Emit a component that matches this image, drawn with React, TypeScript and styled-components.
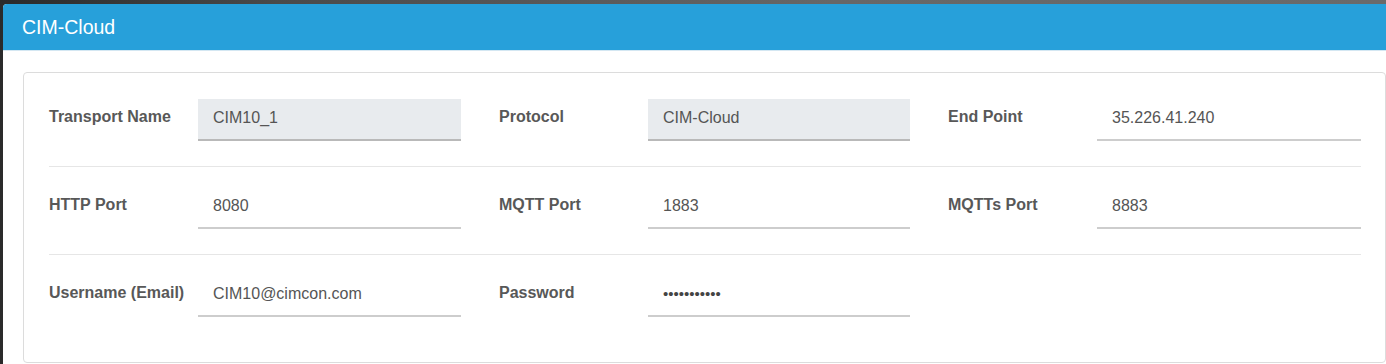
import React from "react";
import styled, { createGlobalStyle } from "styled-components";

const GlobalStyle = createGlobalStyle`
  html, body {
    margin: 0;
    height: 364px;
    overflow: hidden;
    background: linear-gradient(90deg, #2a2a2a 0, #4a4a4a 20%, #676767 60%, #6a6a6a 100%);
    font-family: "Liberation Sans", Arial, sans-serif;
  }
`;

const Page = styled.div`
  padding: 4px 0 0 3px;
  height: 360px;
  background: linear-gradient(180deg, transparent 0, transparent 4px, #2a2a2a 4px);
  background-clip: content-box;
`;

const Panel = styled.section`
  background: #fff;
  border-top-left-radius: 4px;
  height: 100%;
  overflow: hidden;
`;

const Header = styled.header`
  height: 46px;
  display: flex;
  align-items: center;
  padding-left: 19px;
  background: #27a0da;
  border-bottom: 1px solid #d4e7f2;
`;

const Title = styled.h4`
  margin: 0;
  font-size: 19.5px;
  font-weight: normal;
  color: #fff;
`;

const Body = styled.div`
  padding: 21px 0 0 20px;
`;

const Card = styled.div`
  border: 1px solid #dcdcdc;
  border-radius: 4px;
  padding: 6px 24px 20px 25px;
`;

const Row = styled.div`
  display: grid;
  grid-template-columns: 412px 411px 1fr;
  column-gap: 38px;
  padding: 20px 0 25px;
  border-bottom: 1px solid #e6e6e6;

  &:last-child {
    border-bottom: none;
  }
`;

const Field = styled.div`
  display: grid;
  grid-template-columns: 149px 1fr;
  align-items: start;
`;

const Label = styled.label`
  padding-top: 8px;
  line-height: 20px;
  font-size: 16px;
  font-weight: bold;
  color: #585858;
`;

const Input = styled.input<{ $locked?: boolean; $secret?: boolean }>`
  box-sizing: border-box;
  width: 100%;
  height: 42px;
  padding: 0 15px 3px;
  border: none;
  border-bottom: 2px solid ${({ $locked }) => ($locked ? "#b9b9b9" : "#cdcdcd")};
  background: ${({ $locked }) => ($locked ? "#e8ebee" : "#fff")};
  font-family: "Liberation Sans", Arial, sans-serif;
  font-size: ${({ $secret }) => ($secret ? "15px" : "16px")};
  color: ${({ $secret }) => ($secret ? "#444" : "#555")};
  outline: none;
`;

type FieldData = {
  label: string;
  value: string;
  locked?: boolean;
  secret?: boolean;
};

const rows: FieldData[][] = [
  [
    { label: "Transport Name", value: "CIM10_1", locked: true },
    { label: "Protocol", value: "CIM-Cloud", locked: true },
    { label: "End Point", value: "35.226.41.240" },
  ],
  [
    { label: "HTTP Port", value: "8080" },
    { label: "MQTT Port", value: "1883" },
    { label: "MQTTs Port", value: "8883" },
  ],
  [
    { label: "Username (Email)", value: "CIM10@cimcon.com" },
    { label: "Password", value: "cimcon12345", secret: true },
  ],
];

export default function App() {
  return (
    <>
      <GlobalStyle />
      <Page>
        <Panel>
          <Header>
            <Title>CIM-Cloud</Title>
          </Header>
          <Body>
            <Card>
              {rows.map((row, i) => (
                <Row key={i}>
                  {row.map((f) => (
                    <Field key={f.label}>
                      <Label>{f.label}</Label>
                      <Input
                        $locked={f.locked}
                        $secret={f.secret}
                        type={f.secret ? "password" : "text"}
                        value={f.value}
                        readOnly
                      />
                    </Field>
                  ))}
                </Row>
              ))}
            </Card>
          </Body>
        </Panel>
      </Page>
    </>
  );
}
